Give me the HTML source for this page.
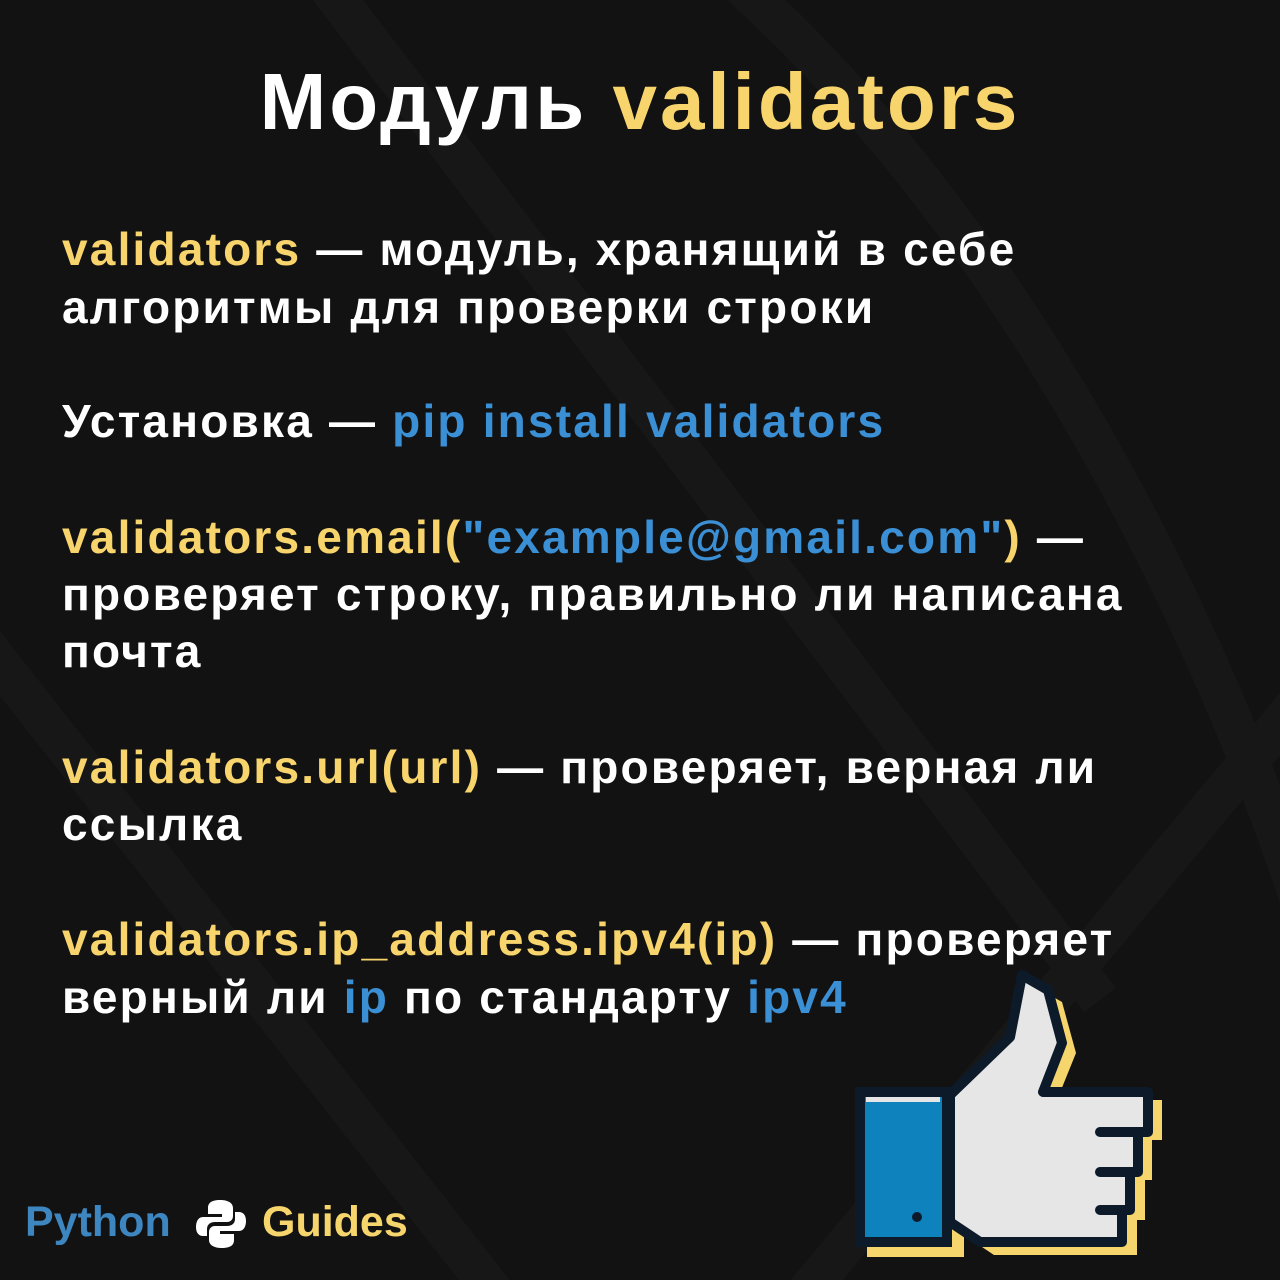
<!DOCTYPE html>
<html><head><meta charset="utf-8"><style>
html,body{margin:0;padding:0}
body{width:1280px;height:1280px;background:#121212;position:relative;overflow:hidden;font-family:"Liberation Sans","DejaVu Sans",sans-serif}
.t{position:absolute;left:0;width:1280px;text-align:center;top:52px;font-size:80px;font-weight:bold;color:#fff;line-height:100px;letter-spacing:3px}
.l{position:absolute;left:62px;font-size:46px;line-height:58px;color:#fff;white-space:nowrap;letter-spacing:2.2px;font-weight:bold}
.y{color:#f8d46c}.b{color:#3b8fd4}
.logo{position:absolute;top:1197px;font-size:43px;font-weight:bold;line-height:50px}
</style></head><body>
<svg width="1280" height="1280" style="position:absolute;left:0;top:0">
<g fill="none" stroke="#171717" stroke-width="40">
<path d="M-50 600 L500 1300"/><path d="M300 -50 L1100 1000"/><path d="M800 1300 L1300 700"/>
<path d="M700 -50 C1000 200 1200 600 1300 900"/>
</g>
</svg>
<div class="t">Модуль <span class="y">validators</span></div>
<div class="l" style="top:220px"><span class="y">validators</span> — модуль, хранящий в себе</div>
<div class="l" style="top:278px">алгоритмы для проверки строки</div>
<div class="l" style="top:392px">Установка — <span class="b">pip install validators</span></div>
<div class="l" style="top:508px"><span class="y">validators.email(</span><span class="b">"example@gmail.com"</span><span class="y">)</span> —</div>
<div class="l" style="top:565px">проверяет строку, правильно ли написана</div>
<div class="l" style="top:622px">почта</div>
<div class="l" style="top:738px"><span class="y">validators.url(url)</span> — проверяет, верная ли</div>
<div class="l" style="top:795px">ссылка</div>
<div class="l" style="top:910px"><span class="y">validators.ip_address.ipv4(ip)</span> — проверяет</div>
<div class="l" style="top:968px">верный ли <span class="b">ip</span> по стандарту <span class="b">ipv4</span></div>
<div class="logo b" style="left:25px;color:#3d86c0">Python</div>
<svg width="56" height="56" style="position:absolute;left:193px;top:1196px" viewBox="0 0 56 56">
<path d="M27 4 C16 4 15 9 15 12 V18 H29 V21 H10 C5 21 3 26 3 31 C3 37 6 40 10 40 H14 V33 C14 28 18 26 22 26 H34 C38 26 40 23 40 20 V12 C40 7 35 4 27 4Z" fill="#fff"/>
<path d="M29 52 C40 52 41 47 41 44 V38 H27 V35 H46 C51 35 53 30 53 25 C53 19 50 16 46 16 H42 V23 C42 28 38 30 34 30 H22 C18 30 16 33 16 36 V44 C16 49 21 52 29 52Z" fill="#fff"/>
</svg>
<div class="logo y" style="left:262px;color:#f6d56d">Guides</div>
<svg width="1280" height="1280" style="position:absolute;left:0;top:0">
<g transform="translate(12,10)" fill="#f6d56d">
<path d="M952 1095 L1012 1037 L1024 977 L1050 992 L1064 1043 L1045 1090 L1150 1090 L1150 1130 L1140 1130 L1140 1170 L1133 1170 L1133 1210 L1125 1210 L1125 1245 L982 1245 L952 1225Z"/>
<rect x="855" y="1090" width="97" height="157"/>
</g>
<path d="M950 1095 L1010 1037 L1022 975 L1048 990 L1062 1043 L1043 1092 L1148 1092 L1148 1132 L1138 1132 L1138 1172 L1130 1172 L1130 1210 L1122 1210 L1122 1242 L980 1242 L950 1222Z" fill="#e6e6e6" stroke="#0c1a2a" stroke-width="10" stroke-linejoin="round"/>
<path d="M1100 1132 H1140 M1100 1172 H1132 M1100 1210 H1124" stroke="#0c1a2a" stroke-width="10" stroke-linecap="round"/>
<rect x="860" y="1092" width="87" height="150" fill="#0d82bd" stroke="#0c1a2a" stroke-width="10"/>
<rect x="866" y="1097" width="74" height="5" fill="#e6e6e6"/>
<circle cx="917" cy="1217" r="5" fill="#0c1a2a"/>
</svg>
</body></html>
